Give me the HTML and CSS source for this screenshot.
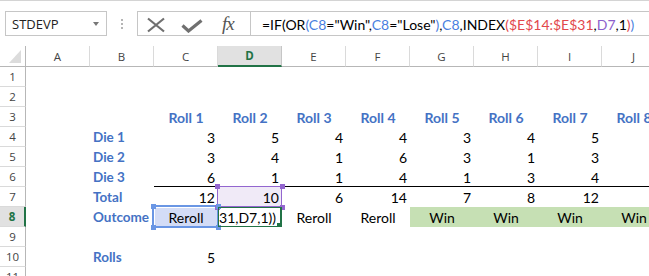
FILE: index.html
```html
<!DOCTYPE html>
<html lang="en">
<head>
    <meta charset="UTF-8">
    <title>Dice Sheet</title>
    <link rel="stylesheet" href="styles.css">
</head>
<body>

<!-- Formula bar -->
<div class="formula-bar">
    <div class="name-box"><span>STDEVP</span><i class="caret"></i></div>
    <div class="grip"><i></i><i></i><i></i></div>
    <div class="fx-buttons">
        <svg class="btn-x" width="20" height="16" viewBox="0 0 20 16"><path d="M2 1.5 L18 14.5 M18 1.5 L2 14.5" stroke="#707070" stroke-width="2.2" fill="none"/></svg>
        <svg class="btn-ok" width="22" height="14" viewBox="0 0 22 14"><path d="M1.5 6.5 L7.5 12 L20.5 1.5" stroke="#707070" stroke-width="3.2" fill="none"/></svg>
        <span class="fx">fx</span>
    </div>
    <div class="formula">=IF(OR<b class="p1">(</b><b class="r-blue">C8</b>="Win",<b class="r-blue">C8</b>="Lose"<b class="p1">)</b>,<b class="r-blue">C8</b>,INDEX<b class="r-red">(</b><b class="r-red">$E$14:$E$31</b>,<b class="r-purple">D7</b>,1<b class="r-red">)</b><b class="p1">)</b></div>
</div>

<!-- Sheet -->
<div class="sheet">
    <div class="corner"><i></i></div>
    <div class="col-h">A</div><div class="col-h">B</div><div class="col-h">C</div><div class="col-h sel">D</div><div class="col-h">E</div>
    <div class="col-h">F</div><div class="col-h">G</div><div class="col-h">H</div><div class="col-h">I</div><div class="col-h">J</div>

    <div class="row-h">1</div>
    <div class="c"></div><div class="c"></div><div class="c"></div><div class="c"></div><div class="c"></div>
    <div class="c"></div><div class="c"></div><div class="c"></div><div class="c"></div><div class="c"></div>

    <div class="row-h">2</div>
    <div class="c"></div><div class="c"></div><div class="c"></div><div class="c"></div><div class="c"></div>
    <div class="c"></div><div class="c"></div><div class="c"></div><div class="c"></div><div class="c"></div>

    <div class="row-h">3</div>
    <div class="c"></div><div class="c"></div>
    <div class="c hd">Roll 1</div><div class="c hd">Roll 2</div><div class="c hd">Roll 3</div><div class="c hd">Roll 4</div>
    <div class="c hd">Roll 5</div><div class="c hd">Roll 6</div><div class="c hd">Roll 7</div><div class="c hd">Roll 8</div>

    <div class="row-h">4</div>
    <div class="c"></div><div class="c lb">Die 1</div>
    <div class="c n">3</div><div class="c n">5</div><div class="c n">4</div><div class="c n">4</div>
    <div class="c n">3</div><div class="c n">4</div><div class="c n">5</div><div class="c n"></div>

    <div class="row-h">5</div>
    <div class="c"></div><div class="c lb">Die 2</div>
    <div class="c n">3</div><div class="c n">4</div><div class="c n">1</div><div class="c n">6</div>
    <div class="c n">3</div><div class="c n">1</div><div class="c n">3</div><div class="c n"></div>

    <div class="row-h">6</div>
    <div class="c"></div><div class="c lb">Die 3</div>
    <div class="c n bb">6</div><div class="c n bb">1</div><div class="c n bb">1</div><div class="c n bb">4</div>
    <div class="c n bb">1</div><div class="c n bb">3</div><div class="c n bb">4</div><div class="c n bb"></div>

    <div class="row-h">7</div>
    <div class="c"></div><div class="c lb">Total</div>
    <div class="c n">12</div>
    <div class="c n sel-purple">10<i class="h tl"></i><i class="h tr"></i><i class="h bl"></i><i class="h br"></i></div>
    <div class="c n">6</div><div class="c n">14</div>
    <div class="c n">7</div><div class="c n">8</div><div class="c n">12</div><div class="c n"></div>

    <div class="row-h sel">8</div>
    <div class="c"></div><div class="c lb">Outcome</div>
    <div class="c ctr sel-blue">Reroll<i class="h tl"></i><i class="h tr"></i><i class="h bl"></i><i class="h br"></i></div>
    <div class="c edit"><span>$E$31,D7,1))</span><i class="fill-handle"></i></div>
    <div class="c ctr">Reroll</div><div class="c ctr">Reroll</div>
    <div class="c ctr win">Win</div><div class="c ctr win">Win</div><div class="c ctr win">Win</div><div class="c ctr win">Win</div>

    <div class="row-h">9</div>
    <div class="c"></div><div class="c"></div><div class="c"></div><div class="c"></div><div class="c"></div>
    <div class="c"></div><div class="c"></div><div class="c"></div><div class="c"></div><div class="c"></div>

    <div class="row-h">10</div>
    <div class="c"></div><div class="c lb">Rolls</div><div class="c n">5</div><div class="c"></div><div class="c"></div>
    <div class="c"></div><div class="c"></div><div class="c"></div><div class="c"></div><div class="c"></div>

    <div class="row-h">11</div>
    <div class="c"></div><div class="c"></div><div class="c"></div><div class="c"></div><div class="c"></div>
    <div class="c"></div><div class="c"></div><div class="c"></div><div class="c"></div><div class="c"></div>
</div>

</body>
</html>
```

FILE: styles.css
```css
* {
    box-sizing: border-box;
}
body {
    margin: 0;
    width: 649px;
    height: 276px;
    overflow: hidden;
    background-color: #ffffff;
    font-family: Lato, "Liberation Sans", sans-serif;
    color: #000;
}

/* Formula bar */
.formula-bar {
    display: flex;
    align-items: flex-start;
    height: 46px;
    padding-top: 10px;
    border-top: 1px solid #d4d4d4;
    overflow: hidden;
}
.name-box {
    display: flex;
    align-items: center;
    flex-shrink: 0;
    width: 102px;
    height: 25px;
    margin-left: 5px;
    padding-left: 6px;
    border: 1px solid #c6c6c6;
    font-family: "Open Sans", sans-serif;
    font-size: 13px;
    color: #222;
}
.caret {
    margin-left: auto;
    margin-right: 7px;
    border-left: 3.5px solid transparent;
    border-right: 3.5px solid transparent;
    border-top: 4px solid #777;
}
.grip {
    display: flex;
    flex-direction: column;
    align-items: center;
    flex-shrink: 0;
    gap: 2px;
    width: 30px;
    padding-top: 8px;
}
.grip i {
    width: 2px;
    height: 2px;
    background-color: #b5b5b5;
}
.fx-buttons {
    display: flex;
    align-items: center;
    flex-shrink: 0;
    width: 113px;
    height: 25px;
    border: 1px solid #c6c6c6;
    border-right: none;
    padding-left: 8px;
}
.btn-x {
    margin-top: 2px;
}
.btn-ok {
    margin-left: 15px;
    margin-top: 4px;
}
.fx {
    margin-left: 19px;
    font-family: "Liberation Serif", serif;
    font-style: italic;
    font-size: 19px;
    color: #555;
    letter-spacing: -1px;
}
.formula {
    flex: 1;
    height: 25px;
    border: 1px solid #c6c6c6;
    border-right: none;
    padding: 3px 0 0 11px;
    font-size: 14px;
    line-height: 19px;
    white-space: nowrap;
}
.formula b {
    font-weight: normal;
}
.r-blue { color: #4a7fe0; }
.r-red { color: #e2474c; }
.r-purple { color: #8d5fcc; }
.p1 { color: #4a7fe0; }

/* Sheet grid */
.sheet {
    display: grid;
    grid-template-columns: 26px repeat(10, 64px);
    grid-template-rows: 21px;
    grid-auto-rows: 20px;
}
.corner {
    display: flex;
    align-items: flex-end;
    justify-content: flex-end;
    padding: 0 4px 3px 0;
    border-right: 1px solid #b7b7b7;
    border-bottom: 1px solid #b7b7b7;
}
.corner i {
    border-left: 12px solid transparent;
    border-bottom: 13px solid #dcdcdc;
}
.col-h {
    display: flex;
    align-items: center;
    justify-content: center;
    border-right: 1px solid #dadada;
    border-bottom: 1px solid #b7b7b7;
    font-family: "Open Sans", sans-serif;
    font-size: 11.5px;
    color: #444;
}
.col-h.sel {
    background-color: #e1e1e1;
    border-bottom: 2px solid #217346;
    color: #217346;
    font-weight: bold;
    border-right-color: #c6c6c6;
}
.row-h {
    display: flex;
    align-items: center;
    justify-content: center;
    border-right: 1px solid #b7b7b7;
    border-bottom: 1px solid #dadada;
    font-family: "Open Sans", sans-serif;
    font-size: 11.5px;
    color: #444;
}
.row-h.sel {
    background-color: #e1e1e1;
    border-right: 2px solid #217346;
    color: #217346;
    font-weight: bold;
}

/* Cells */
.c {
    position: relative;
    padding: 1px 3px 0 3px;
    font-size: 14px;
    line-height: 19px;
    white-space: nowrap;
}
.n {
    text-align: right;
}
.ctr {
    text-align: center;
}
.lb {
    color: #4472c4;
    font-weight: bold;
    font-size: 13.5px;
}
.hd {
    color: #4472c4;
    font-weight: bold;
    text-align: center;
}
.bb {
    box-shadow: inset 0 -1px 0 #000;
}
.win {
    background-color: #c6e0b4;
}

/* Range highlights */
.h {
    position: absolute;
    width: 5px;
    height: 5px;
    z-index: 3;
}
.h.tl { left: -3px; top: -3px; }
.h.tr { right: -3px; top: -3px; }
.h.bl { left: -3px; bottom: -3px; }
.h.br { right: -3px; bottom: -3px; }

.sel-purple {
    background-color: #f0eaf7;
}
.sel-purple::after {
    content: "";
    position: absolute;
    left: -1px;
    top: -1px;
    right: 0;
    bottom: 0;
    border: 1px solid #9366cf;
    z-index: 2;
}
.sel-purple .h {
    background-color: #9366cf;
}
.sel-blue {
    background-color: #d3dcf6;
    box-shadow: inset 0 0 0 1px #fff;
}
.sel-blue::after {
    content: "";
    position: absolute;
    left: -2px;
    top: -2px;
    right: -1px;
    bottom: -1px;
    border: 2px solid #6a96e4;
    z-index: 2;
}
.sel-blue .h {
    background-color: #6a96e4;
}

.edit {
    display: flex;
    justify-content: flex-end;
    overflow: hidden;
    padding-right: 6px;
    z-index: 4;
}
.edit::after {
    content: "";
    position: absolute;
    left: -1px;
    top: -1px;
    right: 0;
    bottom: -1px;
    border: 2px solid #217346;
}
.fill-handle {
    position: absolute;
    right: 0;
    bottom: -1px;
    width: 5px;
    height: 5px;
    background-color: #217346;
    z-index: 5;
}
```
